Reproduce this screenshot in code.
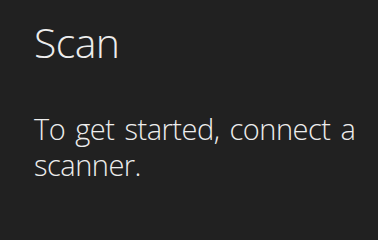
export default function App() {
  return (
    <div
      className="w-full min-h-screen bg-[#212121] text-[#ededed] pl-[34px] pt-[14px] overflow-hidden"
      style={{ fontFamily: '"Open Sans", "Noto Sans", sans-serif' }}
    >
      <h1 className="text-[41px] font-light leading-[56px] tracking-[-0.6px]">Scan</h1>
      <p className="mt-[41px] w-[336px] text-[29px] font-light leading-[36px] tracking-[-0.5px] [word-spacing:3px]">
        To get started, connect a scanner.
      </p>
    </div>
  );
}
